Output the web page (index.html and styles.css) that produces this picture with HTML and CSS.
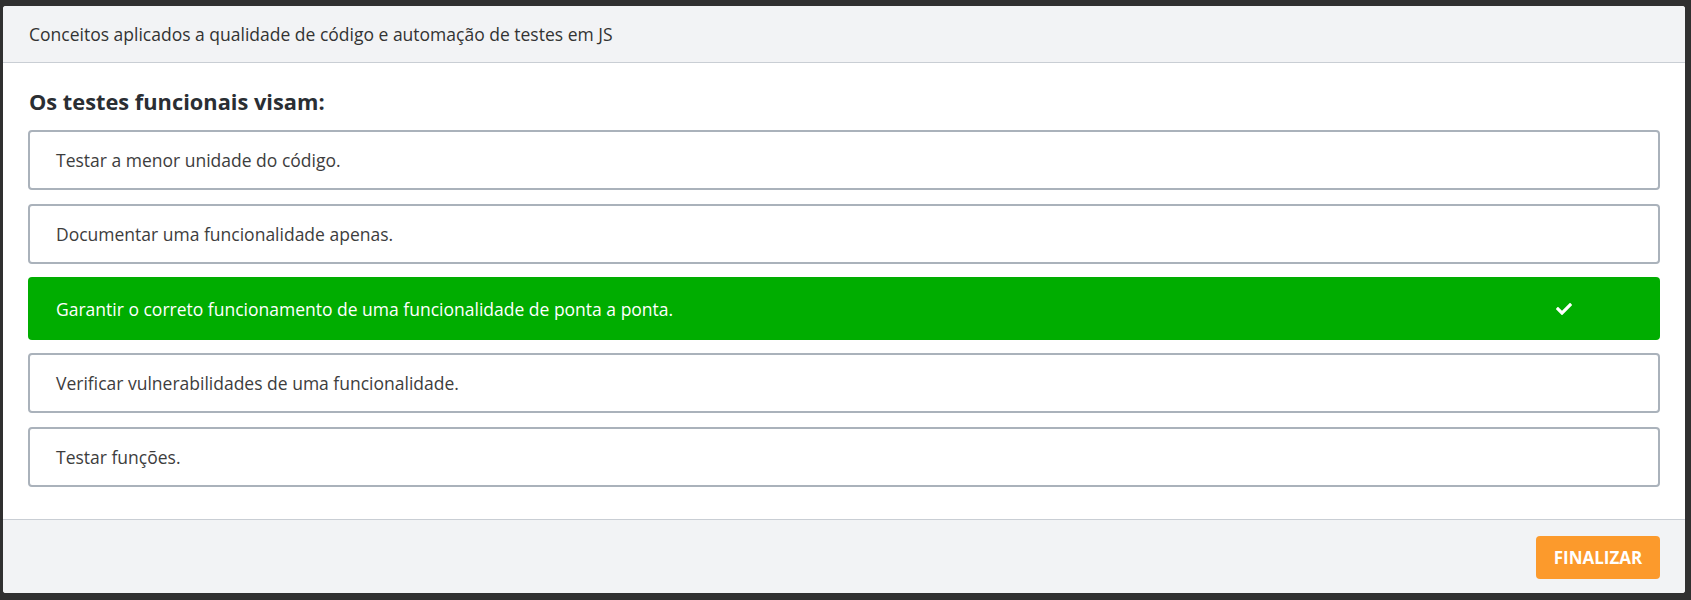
FILE: index.html
```html
<!DOCTYPE html>
<html lang="pt-BR">
<head>
<meta charset="utf-8">
<title>Quiz</title>
<link rel="stylesheet" href="styles.css">
</head>
<body>
<div class="modal">
  <div class="modal-header">Conceitos aplicados a qualidade de código e automação de testes em JS</div>
  <div class="modal-body">
    <h2 class="question">Os testes funcionais visam:</h2>
    <div class="options">
      <div class="option">Testar a menor unidade do código.</div>
      <div class="option">Documentar uma funcionalidade apenas.</div>
      <div class="option option-correct">
        <span class="option-text">Garantir o correto funcionamento de uma funcionalidade de ponta a ponta.</span>
        <svg class="check" viewBox="0 0 512 512" width="16" height="16" aria-hidden="true"><path fill="#fff" d="M173.898 439.404l-166.4-166.4c-9.997-9.997-9.997-26.206 0-36.204l36.203-36.204c9.997-9.998 26.207-9.998 36.204 0L192 312.69 432.095 72.596c9.997-9.997 26.207-9.997 36.204 0l36.203 36.204c9.997 9.997 9.997 26.206 0 36.204l-294.4 294.401c-9.998 9.997-26.207 9.997-36.204-.001z"/></svg>
      </div>
      <div class="option">Verificar vulnerabilidades de uma funcionalidade.</div>
      <div class="option">Testar funções.</div>
    </div>
  </div>
  <div class="modal-footer">
    <button class="btn-finish" type="button">FINALIZAR</button>
  </div>
</div>
</body>
</html>
```

FILE: styles.css
```css
* { box-sizing: border-box; }
html, body { margin: 0; padding: 0; }
body {
  background: #303030;
  font-family: "Open Sans", "Noto Sans", sans-serif;
  height: 600px;
  overflow: hidden;
}
.modal {
  margin: 6px 6px 0 3px;
  width: 1682px;
  height: 587px;
  background: #fff;
  border-radius: 3px;
  overflow: hidden;
  display: flex;
  flex-direction: column;
}
.modal-header {
  height: 57px;
  background: #f2f3f5;
  border-bottom: 1px solid #c9ced4;
  padding: 0 26px;
  display: flex;
  align-items: center;
  font-size: 17.5px;
  color: #333;
}
.modal-body {
  height: 456px;
  padding: 24px 25px 32px 25px;
}
.question {
  margin: 0 0 13px 1px;
  font-size: 21.8px;
  line-height: 30px;
  font-weight: 700;
  color: #2a2e33;
}
.options {
  display: flex;
  flex-direction: column;
}
.option {
  height: 60px;
  margin-bottom: 14px;
  border: 2px solid #aab2bb;
  border-radius: 4px;
  padding: 0 26px;
  display: flex;
  align-items: center;
  font-size: 17.5px;
  color: #3d3d3d;
}
.option:last-child { margin-bottom: 0; }
.options .option:nth-child(2) { margin-bottom: 13px; }
.option-correct {
  height: 63px;
  margin-top: 0;
  margin-bottom: 13px;
  border: none;
  background: #00ad00;
  color: #fff;
  padding: 0 88px 0 28px;
  justify-content: space-between;
}
.check { display: block; margin-top: 1px; }
.modal-footer {
  flex: 1;
  background: #f2f3f5;
  border-top: 1px solid #c9ced4;
  display: flex;
  justify-content: flex-end;
  align-items: flex-start;
  padding: 16px 25px 0 0;
}
.btn-finish {
  width: 124px;
  height: 43px;
  border: none;
  border-radius: 4px;
  background: #fc9a2c;
  color: #fff;
  font-family: "Open Sans", "Noto Sans", sans-serif;
  font-weight: 700;
  font-size: 17px;
  padding: 0;
}
```
